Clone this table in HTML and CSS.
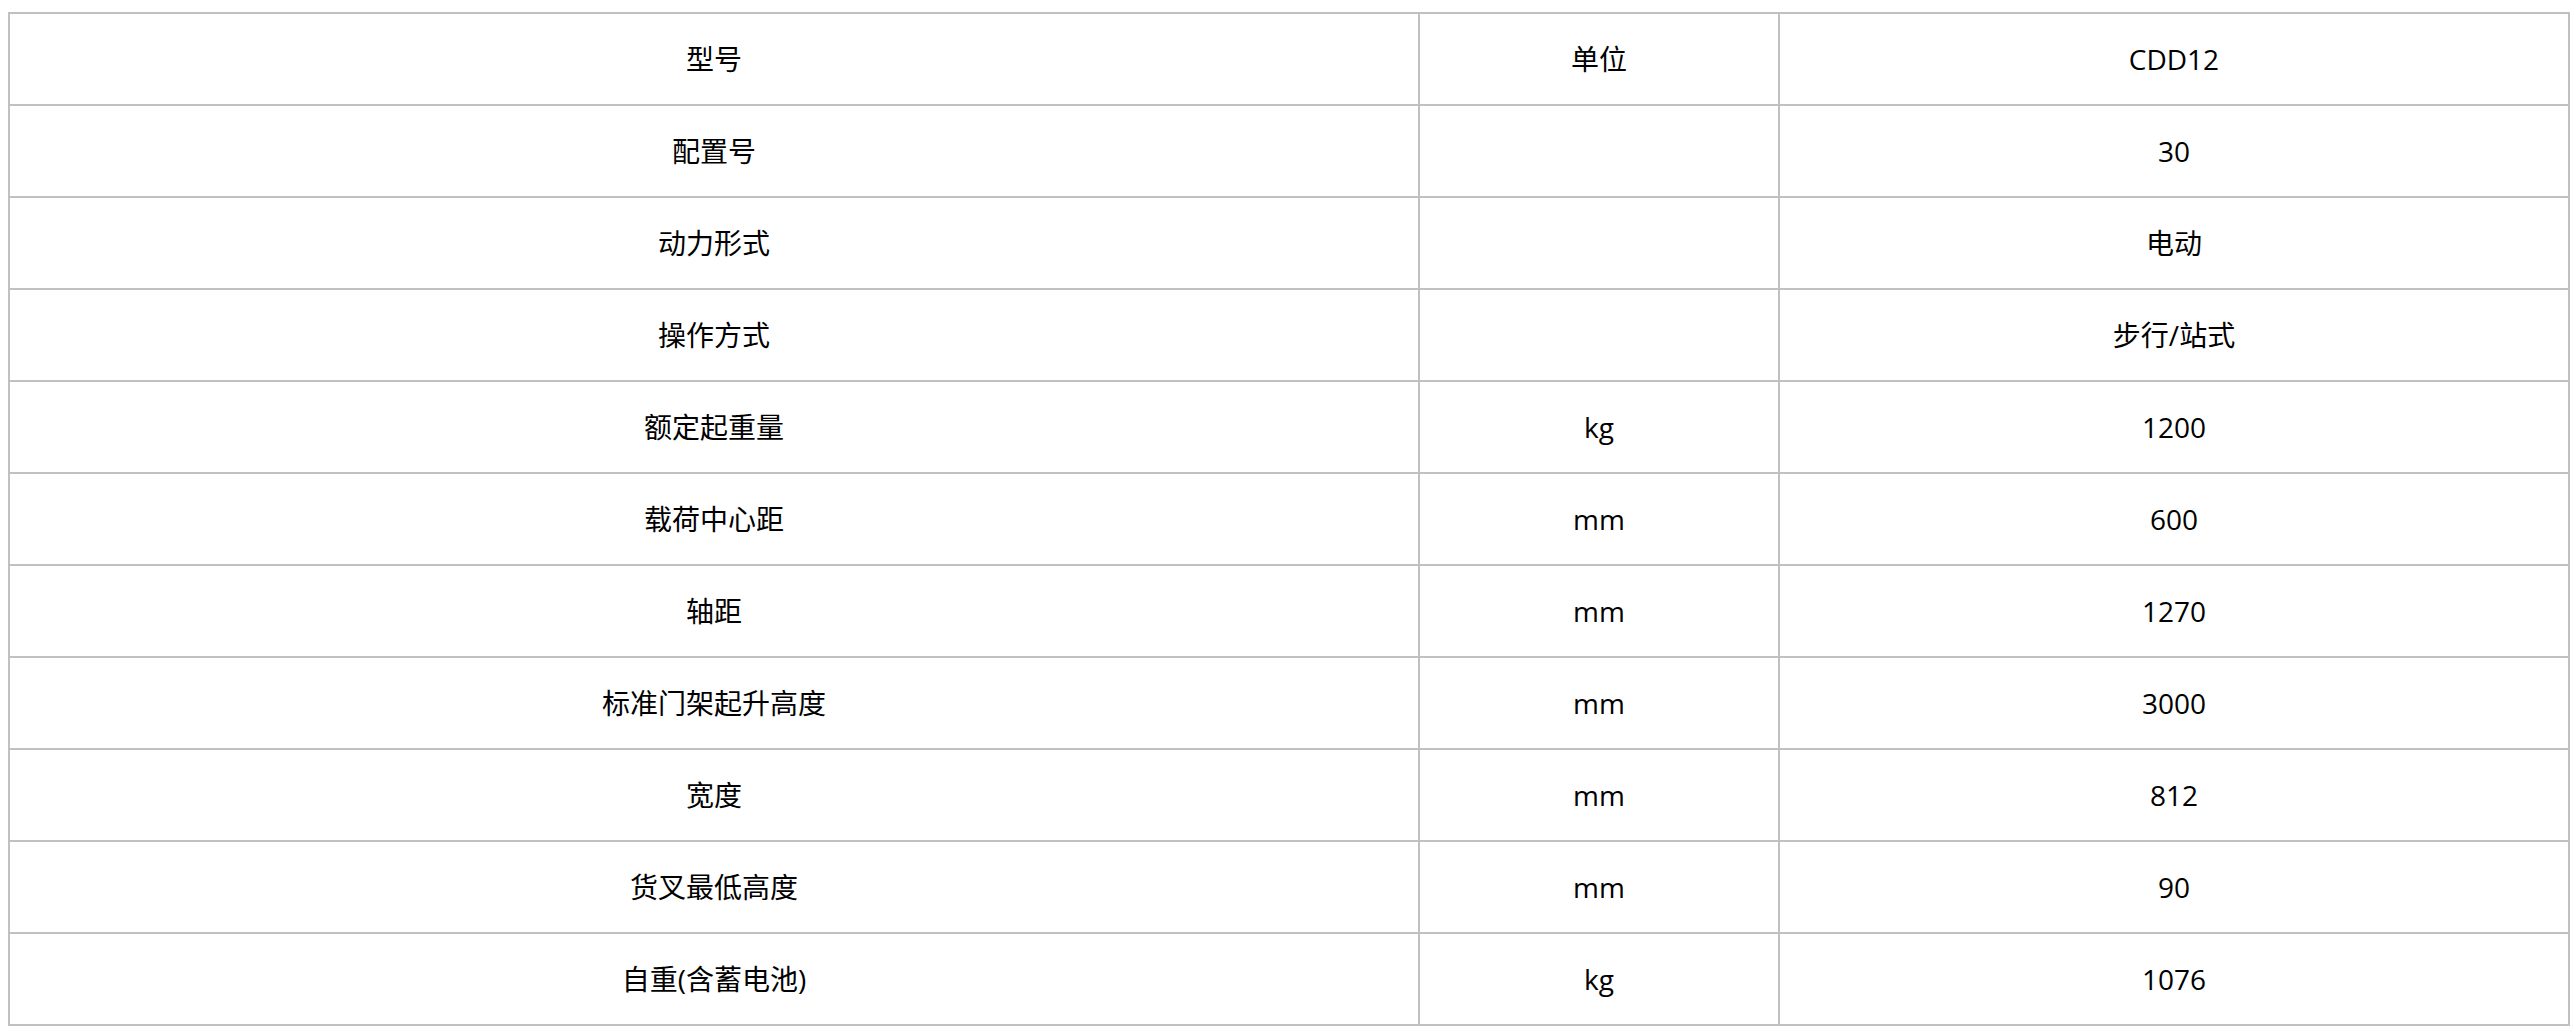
FILE: index.html
```html
<!DOCTYPE html>
<html lang="zh-CN">
<head>
<meta charset="utf-8">
<title>CDD12 参数</title>
<link rel="stylesheet" href="styles.css">
</head>
<body>
<div class="page">
<table class="spec">
  <colgroup>
    <col class="c-name">
    <col class="c-unit">
    <col class="c-val">
  </colgroup>
  <tbody>
    <tr><td>型号</td><td>单位</td><td>CDD12</td></tr>
    <tr><td>配置号</td><td></td><td>30</td></tr>
    <tr><td>动力形式</td><td></td><td>电动</td></tr>
    <tr><td>操作方式</td><td></td><td>步行/站式</td></tr>
    <tr><td>额定起重量</td><td>kg</td><td>1200</td></tr>
    <tr><td>载荷中心距</td><td>mm</td><td>600</td></tr>
    <tr><td>轴距</td><td>mm</td><td>1270</td></tr>
    <tr><td>标准门架起升高度</td><td>mm</td><td>3000</td></tr>
    <tr><td>宽度</td><td>mm</td><td>812</td></tr>
    <tr><td>货叉最低高度</td><td>mm</td><td>90</td></tr>
    <tr><td>自重(含蓄电池)</td><td>kg</td><td>1076</td></tr>
  </tbody>
</table>
</div>
</body>
</html>
```

FILE: styles.css
```css
html, body {
  margin: 0;
  padding: 0;
  background: #ffffff;
}

.page {
  padding: 12px 8px 8px 8px;
}

.spec {
  border-collapse: collapse;
  width: 2560px;
  table-layout: fixed;
  font-family: "Open Sans", "Noto Sans CJK SC", sans-serif;
  font-size: 28px;
  color: #000000;
}

.c-name { width: 1410px; }
.c-unit { width: 360px; }
.c-val { width: 790px; }

.spec td {
  border: 2px solid #c0c0c0;
  height: 90px;
  padding: 0;
  text-align: center;
  vertical-align: middle;
  line-height: 1.3;
}
```
